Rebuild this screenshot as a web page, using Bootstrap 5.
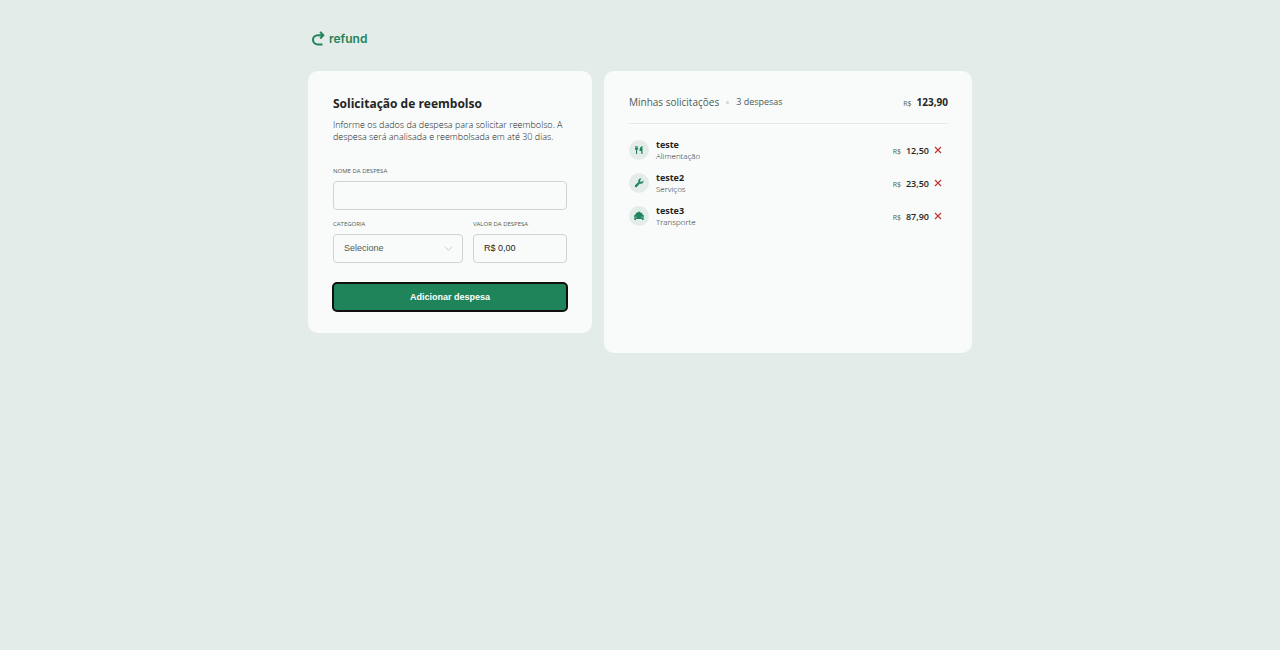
<!DOCTYPE html>
<html lang="pt-BR">
<head>
<meta charset="utf-8">
<meta name="viewport" content="width=device-width, initial-scale=1">
<title>Refund</title>
<link href="https://cdn.jsdelivr.net/npm/bootstrap@5.3.0/dist/css/bootstrap.min.css" rel="stylesheet">
<style>
  :root { --green: #1f8459; --ink: #1f2523; --muted: #4d5c57; --mint: #e4ece9; --paper: #f9fbfa; --line: #cdd5d2; }
  body { background: var(--mint); color: var(--ink); font-family: "Open Sans", sans-serif; font-size: 9px; line-height: 12px; }
  .page { max-width: 664px; }
  .brand { color: var(--green); font-family: Inter, sans-serif; font-weight: 600; font-size: 12px; line-height: 16px; gap: 4px; padding: 31px 0 24px 4px; }
  .panel { background: var(--paper); border-radius: 10px; padding: 24px 24px 24px 25px; min-width: 0; }
  .layout { gap: 12px; }
  .request { flex: 1 1 284px; max-width: 284px; padding: 24px 25px 22px; }
  .expenses { flex: 1 1 368px; min-height: 282px; }
  h1 { font-size: 12px; line-height: 18px; font-weight: 700; margin-bottom: 6px; }
  .intro { color: #14201c; font-weight: 300; margin-bottom: 24px; }
  .field-label { display: block; color: var(--muted); font-size: 6px; line-height: 8px; text-transform: uppercase; margin-bottom: 6px; }
  .field { height: 29px; border: 1px solid var(--line); border-radius: 4px; background-color: transparent; color: var(--ink); font-family: "Liberation Sans", sans-serif; font-size: 9px; line-height: 12px; padding: 0 10px 2px; }
  select.field { color: var(--muted); background-position: right 9px center; background-size: 9px;
    background-image: url("data:image/svg+xml,%3Csvg xmlns='http://www.w3.org/2000/svg' viewBox='0 0 10 10'%3E%3Cpath d='M1 3l4 4 4-4' fill='none' stroke='%23bfc9c5'/%3E%3C/svg%3E"); }
  .fields { gap: 10px; margin: 10px 0 20px; }
  .category { flex: 130 1 0; min-width: 0; }
  .amount { flex: 94 1 0; min-width: 0; }
  .submit, .submit:hover { height: 28px; background: var(--green); border: 0; border-radius: 4px; color: #fff; font-family: "Liberation Sans", sans-serif; font-size: 9px; line-height: 12px; font-weight: 700; padding: 0; outline: 2px solid #101010; outline-offset: -1px; }
  .summary { border-bottom: 1px solid var(--mint); padding-bottom: 14px; margin-bottom: 15px; line-height: 14px; }
  h2 { font-size: 10px; line-height: 14px; font-weight: 400; color: var(--muted); margin: 0; }
  .dot { width: 3px; height: 3px; border-radius: 50%; background: var(--line); margin: 0 7px; }
  .count { color: var(--muted); }
  .currency { color: var(--muted); font-size: 7px; line-height: 8px; font-weight: 400; margin-right: 5px; }
  .total { font-size: 10px; font-weight: 700; }
  .items { gap: 11px; padding-right: 6px; }
  .item { line-height: 11px; }
  .kind { width: 20px; height: 20px; border-radius: 50%; background: var(--mint); color: var(--green); margin-right: 7px; }
  .type { color: #14201c; font-size: 8px; font-weight: 300; }
  .remove { color: #bf3535; line-height: 0; margin-left: 5px; }
</style>
</head>
<body>
<div class="page mx-auto">
  <header class="d-flex brand align-items-center">
    <svg width="13" height="16" viewBox="0 0 13 16" fill="none" stroke="currentColor" stroke-width="2" aria-hidden="true"><path d="M10.500 13.500H6C3 13.500 1 11.300 1 8.800S3 4.200 6 4.200h4"/><path d="M8.200.9 11.300 4.200 8.200 7.500"/></svg>
    <span>refund</span>
  </header>
  <main class="d-flex layout align-items-start">
    <form class="panel request">
      <h1>Solicitação de reembolso</h1>
      <p class="intro">Informe os dados da despesa para solicitar reembolso. A despesa será analisada e reembolsada em até 30 dias.</p>
      <label class="field-label" for="expense">Nome da despesa</label>
      <input class="form-control field" id="expense" type="text">
      <div class="d-flex fields">
        <div class="category">
          <label class="field-label" for="category">Categoria</label>
          <select class="form-select field" id="category">
            <option>Selecione</option><option>Alimentação</option><option>Serviços</option><option>Transporte</option>
          </select>
        </div>
        <div class="amount">
          <label class="field-label" for="amount">Valor da despesa</label>
          <input class="form-control field" id="amount" type="text" value="R$ 0,00">
        </div>
      </div>
      <button class="btn submit w-100 d-block" type="button">Adicionar despesa</button>
    </form>
    <section class="panel expenses">
      <header class="d-flex align-items-center summary">
        <h2>Minhas solicitações</h2><span class="dot"></span><span class="count">3 despesas</span>
        <span class="total ms-auto"><span class="currency">R$</span>123,90</span>
      </header>
      <ul class="list-unstyled d-flex flex-column items mb-0">
        <li class="d-flex align-items-center item">
          <span class="kind d-flex align-items-center justify-content-center"><svg width="10" height="10" viewBox="0 0 10 10" fill="currentColor" aria-hidden="true"><path d="M1 1h.6v2h.6V1h.7v2h.6V1h.6v2.500c0 .9-.4 1.300-1 1.500v4H2V5C1.400 4.800 1 4.400 1 3.500zM8.500 1v8H7.300V6H5.500C5.500 3 6.600 1.200 8.500 1z"/></svg></span>
          <div><div class="fw-bold">teste</div><div class="type">Alimentação</div></div>
          <span class="ms-auto fw-semibold"><span class="currency">R$</span>12,50</span>
          <button class="btn p-0 border-0 remove" type="button" aria-label="Remover teste"><svg width="8" height="8" viewBox="0 0 8 8" stroke="currentColor" stroke-width="1.200" aria-hidden="true"><path d="M1 1l6 6M7 1 1 7"/></svg></button>
        </li>
        <li class="d-flex align-items-center item">
          <span class="kind d-flex align-items-center justify-content-center"><svg width="10" height="10" viewBox="0 0 10 10" fill="currentColor" aria-hidden="true"><path d="M7.600.7 6.200 2.100v1.700h1.700l1.500-1.400c.5 1.700-.8 3.400-2.500 3.400-.4 0-.7-.1-1-.2L2.700 8.900C1.600 9.800.2 8.400 1.100 7.300l3.300-3.200C3.600 2.200 5.300 0 7.600.7z"/></svg></span>
          <div><div class="fw-bold">teste2</div><div class="type">Serviços</div></div>
          <span class="ms-auto fw-semibold"><span class="currency">R$</span>23,50</span>
          <button class="btn p-0 border-0 remove" type="button" aria-label="Remover teste2"><svg width="8" height="8" viewBox="0 0 8 8" stroke="currentColor" stroke-width="1.200" aria-hidden="true"><path d="M1 1l6 6M7 1 1 7"/></svg></button>
        </li>
        <li class="d-flex align-items-center item">
          <span class="kind d-flex align-items-center justify-content-center"><svg width="10" height="10" viewBox="0 0 10 10" fill="currentColor" fill-rule="evenodd" aria-hidden="true"><path d="M3.700.8h2.600v1h1.500L9 4.300h1v1l-.4.400V9H8V8H2v1H.4V5.700L0 5.300v-1h1l1.200-2.500h1.500zM1.500 5.600v.9h1.300v-.4zM8.500 5.600l-1.300.5v.4h1.300z"/></svg></span>
          <div><div class="fw-bold">teste3</div><div class="type">Transporte</div></div>
          <span class="ms-auto fw-semibold"><span class="currency">R$</span>87,90</span>
          <button class="btn p-0 border-0 remove" type="button" aria-label="Remover teste3"><svg width="8" height="8" viewBox="0 0 8 8" stroke="currentColor" stroke-width="1.200" aria-hidden="true"><path d="M1 1l6 6M7 1 1 7"/></svg></button>
        </li>
      </ul>
    </section>
  </main>
</div>
<script src="https://cdn.jsdelivr.net/npm/bootstrap@5.3.0/dist/js/bootstrap.bundle.min.js"></script>
</body>
</html>
